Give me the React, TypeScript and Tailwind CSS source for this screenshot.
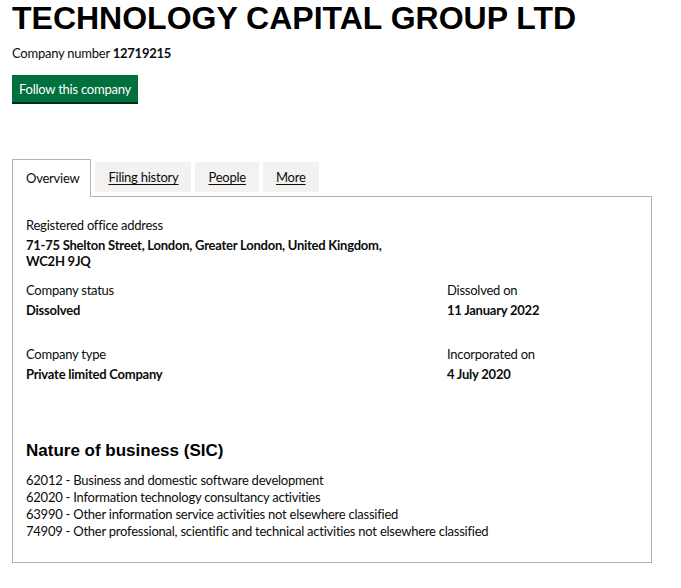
const sic = [
  "62012 - Business and domestic software development",
  "62020 - Information technology consultancy activities",
  "63990 - Other information service activities not elsewhere classified",
  "74909 - Other professional, scientific and technical activities not elsewhere classified",
];

const body = "font-['Lato','Liberation_Sans',sans-serif] tracking-[-0.24px]";

const Field = ({ label, value }: { label: string; value: string }) => (
  <div>
    <p className="text-[13px] leading-4 text-[#0b0c0c]">{label}</p>
    <p className="mt-1 text-[13px] leading-4 font-bold text-[#0b0c0c]">{value}</p>
  </div>
);

export default function App() {
  return (
    <div className={`min-h-[588px] bg-white px-3 text-[#0b0c0c] ${body}`}>
      {/* Heading */}
      <h1 className="font-['Liberation_Sans',Arial,sans-serif] text-[32px] leading-9 font-bold tracking-normal text-black">
        TECHNOLOGY CAPITAL GROUP LTD
      </h1>
      <p className="mt-[9px] text-[13px] leading-4">
        Company number <strong className="font-bold">12719215</strong>
      </p>
      <button className="mt-[14px] h-[27px] bg-[#00703c] px-[7px] text-[13px] leading-4 text-white shadow-[0_2px_0_#002d18]">
        Follow this company
      </button>

      {/* Tabs */}
      <ul className="mt-[57px] flex items-end gap-1">
        <li className="relative -mb-px border border-b-0 border-[#b1b4b6] bg-white pl-[13px] pr-[11px] pt-[10px] pb-[11px] text-[13px] leading-4">
          Overview
        </li>
        {["Filing history", "People", "More"].map((t) => (
          <li
            key={t}
            className="mb-1 bg-[#f3f2f1] px-[13px] pt-[7px] pb-[7px] text-[13px] leading-4 underline underline-offset-2"
          >
            {t}
          </li>
        ))}
      </ul>

      {/* Panel */}
      <div className="w-[640px] border border-[#b1b4b6] px-[13px] pt-[20px] pb-[22px]">
        <p className="text-[13px] leading-4">Registered office address</p>
        <p className="mt-1 w-[370px] text-[13px] leading-4 font-bold">
          71-75 Shelton Street, London, Greater London, United Kingdom, WC2H 9JQ
        </p>

        <div className="mt-[13px] grid grid-cols-[421px_1fr] gap-y-[28px]">
          <Field label="Company status" value="Dissolved" />
          <Field label="Dissolved on" value="11 January 2022" />
          <Field label="Company type" value="Private limited Company" />
          <Field label="Incorporated on" value="4 July 2020" />
        </div>

        <h2 className="mt-[59px] font-['Liberation_Sans',Arial,sans-serif] text-[17px] leading-5 font-bold tracking-normal text-black">
          Nature of business (SIC)
        </h2>
        <ul className="mt-[11px] text-[13px] leading-[17px]">
          {sic.map((s) => (
            <li key={s}>{s}</li>
          ))}
        </ul>
      </div>
    </div>
  );
}
